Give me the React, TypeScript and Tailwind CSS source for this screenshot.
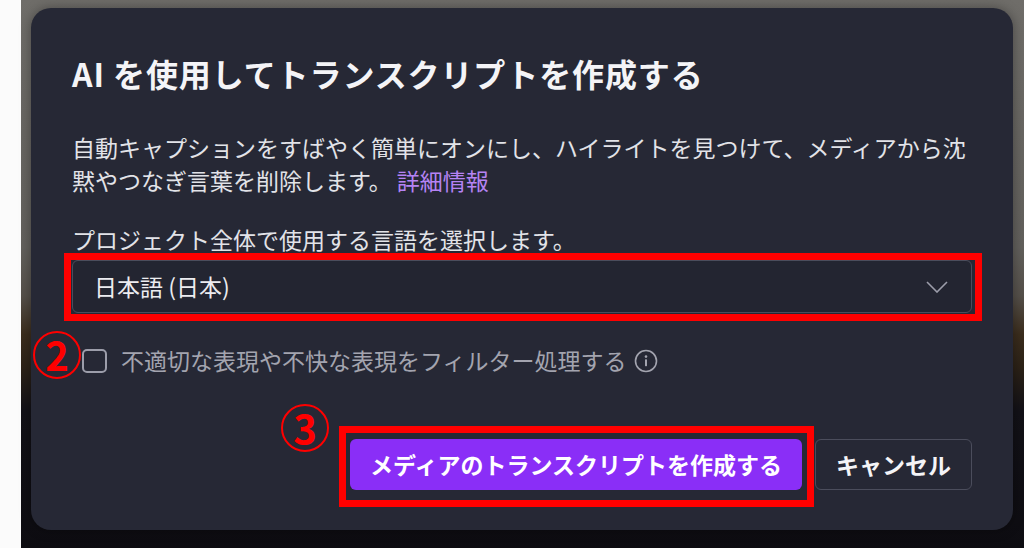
function Annotation({ n, className }: { n: string; className: string }) {
  return (
    <div
      className={`absolute flex h-[48px] w-[48px] items-center justify-center rounded-full border-2 border-[#ff0000] text-[40px] font-bold leading-none text-[#ff0000] ${className}`}
    >
      <span className="-mt-[2px]">{n}</span>
    </div>
  );
}

export default function App() {
  return (
    <div className="flex h-[548px] w-[1024px] overflow-hidden bg-white font-['Noto_Sans_CJK_JP','Noto_Sans',sans-serif]">
      <div className="w-[21px] shrink-0 bg-[#fbfbfb]" />

      <div className="flex-1 bg-[linear-gradient(to_bottom,#6f6d69_0%,#62605c_45%,#55504a_54%,#3b2d1d_61%,#2c2217_67%,#121117_75%,#0d0c11_100%)] pl-[10px] pr-[11px] pt-2">
        <div className="flex h-[522px] flex-col rounded-[20px] bg-[#262835] px-[41px] pt-[45px] shadow-[0_0_12px_rgba(0,0,0,0.35)]">
          {/* タイトル */}
          <h1 className="text-[32px] font-bold leading-[40px] tracking-[0.9px] text-[#f4f4f7]">
            AI を使用してトランスクリプトを作成する
          </h1>

          {/* 説明 */}
          <p className="mt-[38px] text-[23px] leading-[33px] text-[#e2e3e8]">
            自動キャプションをすばやく簡単にオンにし、ハイライトを見つけて、メディアから沈
            <br />
            黙やつなぎ言葉を削除します。 <span className="text-[#b583f4]">詳細情報</span>
          </p>

          <p className="mt-[26px] text-[23px] leading-[33px] text-[#e2e3e8]">
            プロジェクト全体で使用する言語を選択します。
          </p>

          {/* 言語セレクト */}
          <div className="relative mt-[4px]">
            <button className="flex h-[53px] w-full items-center justify-between rounded-[6px] border border-[#4b4d5c] bg-[#232531] pl-[21px] pr-[23px] text-[23px] text-[#ececf0]">
              <span>日本語 (日本)</span>
              <svg width="22" height="12" viewBox="0 0 22 12" className="text-[#9c9daa]">
                <polyline points="1,1 11,11 21,1" fill="none" stroke="currentColor" strokeWidth="1.6" />
              </svg>
            </button>
            <div className="pointer-events-none absolute -bottom-[8px] -left-[8px] -right-[10px] -top-[7px] border-[7px] border-[#ff0000]" />
          </div>

          {/* フィルター */}
          <div className="relative mt-[31px] flex h-[33px] items-center">
            <Annotation n="2" className="-left-[39px] -top-[13px]" />
            <div className="ml-[10px] h-[24px] w-[25px] rounded-[5px] border-2 border-[#9c9daa]" />
            <span className="ml-[14px] text-[23px] leading-[33px] text-[#a3a4af]">
              不適切な表現や不快な表現をフィルター処理する
            </span>
            <svg width="24" height="24" viewBox="0 0 24 24" className="ml-[7px] text-[#a3a4af]">
              <circle cx="12" cy="12" r="10.5" fill="none" stroke="currentColor" strokeWidth="1.6" />
              <circle cx="12" cy="7.6" r="1.3" fill="currentColor" />
              <rect x="11" y="10.2" width="2" height="7" rx="0.6" fill="currentColor" />
            </svg>
          </div>

          {/* ボタン */}
          <div className="mt-[62px] flex justify-end gap-[13px]">
            <div className="relative">
              <Annotation n="3" className="-left-[69px] -top-[35px]" />
              <button className="h-[51px] w-[452px] rounded-[6px] bg-[#8a2ef7] text-[23px] font-bold text-white">
                メディアのトランスクリプトを作成する
              </button>
              <div className="pointer-events-none absolute -bottom-[17px] -left-[11px] -right-[12px] -top-[13px] border-[7px] border-[#ff0000]" />
            </div>
            <button className="h-[51px] w-[157px] rounded-[6px] border border-[#4b4d5c] text-[23px] font-bold text-[#f4f4f7]">
              キャンセル
            </button>
          </div>
        </div>
      </div>
    </div>
  );
}
